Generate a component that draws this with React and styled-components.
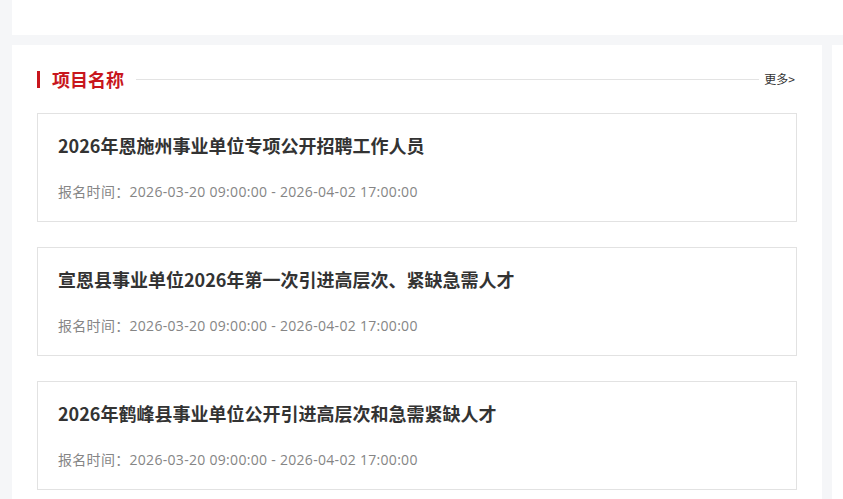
import React from "react";
import styled, { createGlobalStyle } from "styled-components";

const Global = createGlobalStyle`
  html, body { margin: 0; padding: 0; background: #f5f6f8; }
  body { font-family: "Noto Sans CJK SC", "Noto Sans", sans-serif; color: #333; }
  * { box-sizing: border-box; }
`;

const Page = styled.div`
  padding-left: 12px;
  display: flex;
  flex-direction: column;
  gap: 10px;
`;

const TopBar = styled.div`
  height: 35px;
  background: #fff;
`;

const Row = styled.div`
  display: flex;
  gap: 10px;
  align-items: stretch;
`;

const Main = styled.section`
  width: 810px;
  flex: none;
  background: #fff;
  padding: 25px 25px 20px;
`;

const Side = styled.aside`
  flex: 1;
  background: #fff;
  min-height: 460px;
`;

const Header = styled.div`
  display: flex;
  align-items: center;
  height: 18px;
  margin-bottom: 25px;
`;

const Bar = styled.span`
  width: 3px;
  height: 17px;
  background: #c8161d;
  flex: none;
`;

const Title = styled.h2`
  margin: 0 12px;
  font-size: 18px;
  line-height: 18px;
  font-weight: 700;
  color: #c8161d;
  white-space: nowrap;
`;

const Line = styled.span`
  flex: 1;
  height: 1px;
  background: #e3e3e3;
`;

const More = styled.a`
  margin-left: 5px;
  margin-right: 2px;
  font-size: 12px;
  line-height: 14px;
  color: #333;
  text-decoration: none;
  white-space: nowrap;
`;

const List = styled.div`
  display: flex;
  flex-direction: column;
  gap: 25px;
`;

const Card = styled.div`
  border: 1px solid #e2e2e2;
  background: #fff;
  padding: 19px 20px 19px;
  display: flex;
  flex-direction: column;
  gap: 24px;
`;

const CardTitle = styled.h3`
  margin: 0;
  font-size: 18px;
  line-height: 24px;
  font-weight: 700;
  color: #333;
`;

const Meta = styled.p`
  margin: 0;
  padding-top: 1px;
  font-family: "Open Sans", "Noto Sans CJK SC", sans-serif;
  font-size: 14px;
  line-height: 20px;
  letter-spacing: 0.3px;
  color: #858585;
`;

const items = [
  "2026年恩施州事业单位专项公开招聘工作人员",
  "宣恩县事业单位2026年第一次引进高层次、紧缺急需人才",
  "2026年鹤峰县事业单位公开引进高层次和急需紧缺人才",
];

export default function App() {
  return (
    <>
      <Global />
      <Page>
        <TopBar />
        <Row>
          <Main>
            <Header>
              <Bar />
              <Title>项目名称</Title>
              <Line />
              <More href="#">更多&gt;</More>
            </Header>
            <List>
              {items.map((t) => (
                <Card key={t}>
                  <CardTitle>{t}</CardTitle>
                  <Meta>报名时间：2026-03-20 09:00:00 - 2026-04-02 17:00:00</Meta>
                </Card>
              ))}
            </List>
          </Main>
          <Side />
        </Row>
      </Page>
    </>
  );
}
